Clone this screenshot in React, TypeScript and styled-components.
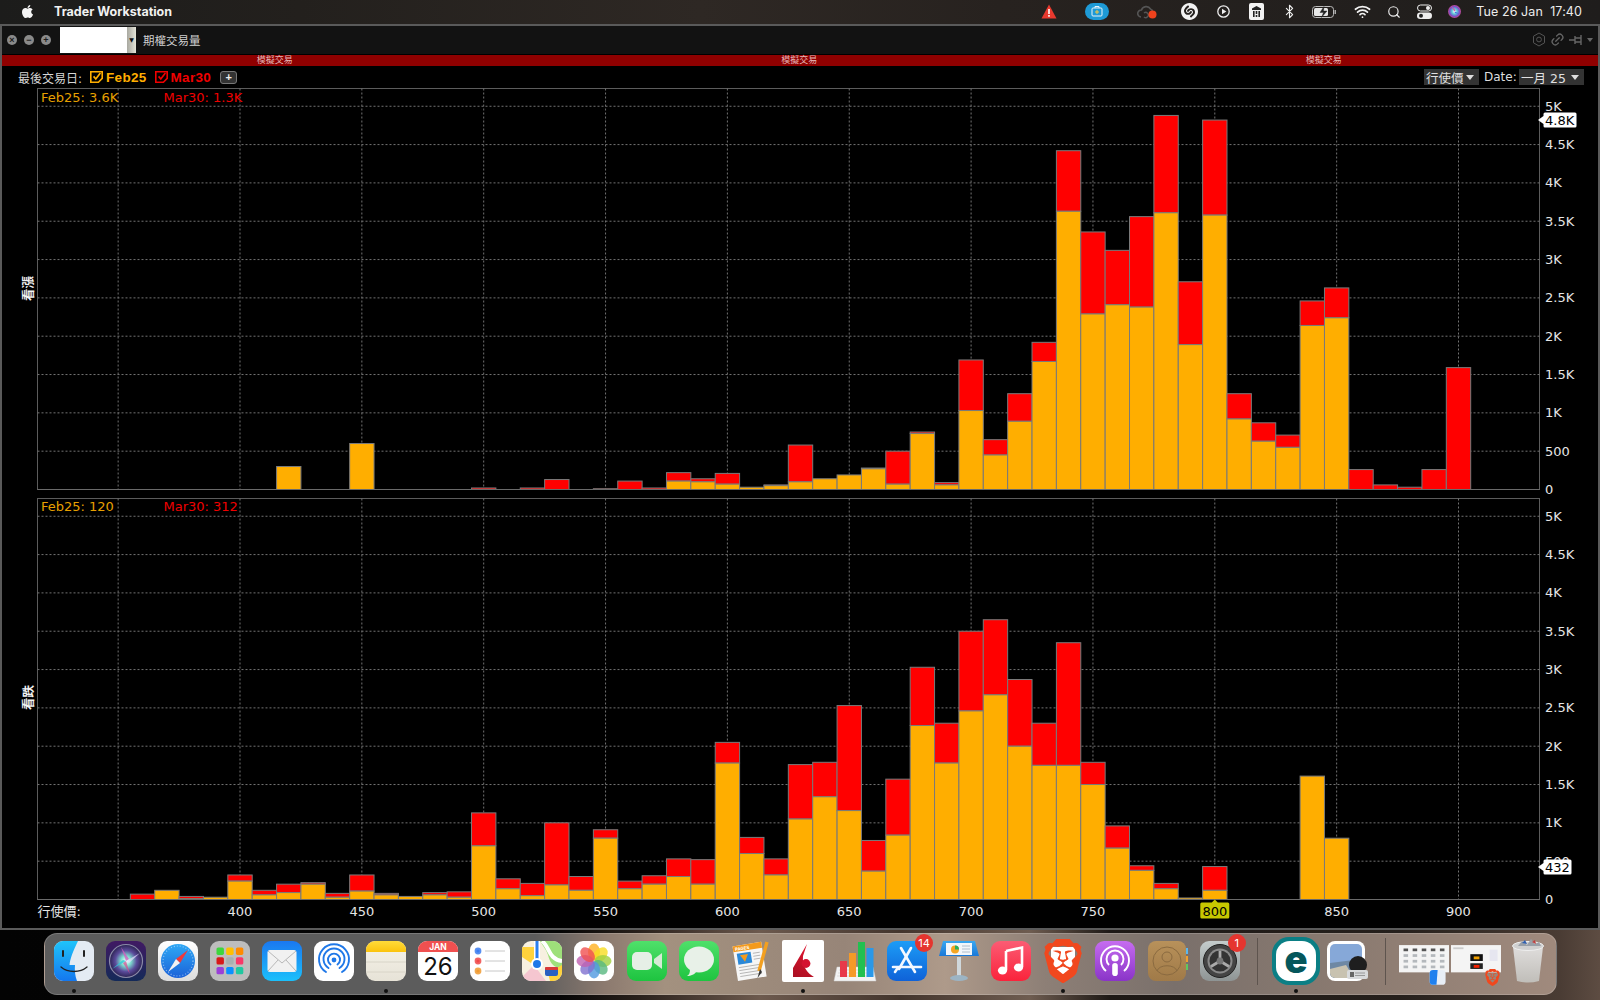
import React from "react";
import styled, { createGlobalStyle } from "styled-components";
import { FaApple } from "react-icons/fa";
import { SiShazam, SiBrave } from "react-icons/si";
import { Bluetooth, Search, Wifi, Link2 } from "lucide-react";

const UI = `"DejaVu Sans", "Noto Sans CJK TC", sans-serif`;

const Global = createGlobalStyle`
  html, body { margin: 0; padding: 0; background: #000; width: 1600px; height: 1000px; overflow: hidden; }
  #root { width: 1600px; height: 1000px; }
`;

const Page = styled.div`
  width: 1600px; height: 1000px; display: flex; flex-direction: column; overflow: hidden;
  font-family: ${UI};
  background:
    linear-gradient(90deg, #030303 0, #050505 560px, #2a211c 640px, #6d5a4e 760px, #43352d 900px, #6e5c50 1030px, #1e1916 1110px, #26201c 1400px, #4a3c34 1560px, #5d4c42 1600px);
`;

/* ---------- menu bar ---------- */
const MenuBar = styled.div`
  height: 24px; flex: none; box-sizing: border-box; display: flex; align-items: center; color: #f0f0f0;
  background: linear-gradient(90deg, #1c1c1b 0, #23201d 300px, #2e2824 700px, #27221f 1000px, #1f1d1c 1600px);
  padding: 0 18px 1px 20px;
`;
const AppleSlot = styled.div` width: 34px; display: flex; align-items: center; `;
const AppName = styled.div`
  font: 700 12.5px "Inter", sans-serif; color: #f2f2f2;
`;
const MenuRight = styled.div` margin-left: auto; display: flex; align-items: center; `;
const MenuSlot = styled.div<{ $w: number }>`
  width: ${(p) => p.$w}px; height: 23px; display: flex; align-items: center; justify-content: center;
`;
const Clock = styled.div`
  margin-left: 10px; font: 400 12.5px "Inter", sans-serif; color: #ececec; white-space: pre; letter-spacing: .1px;
`;

/* ---------- window ---------- */
const Win = styled.div`
  flex: none; height: 906px; box-sizing: border-box; display: flex; flex-direction: column;
  border: 2px solid #5a5a5a; background: #000;
`;
const TitleRow = styled.div`
  height: 28px; flex: none; box-sizing: border-box; display: flex; align-items: center; background: #121212; padding: 0 0 1px 5px;
`;
const Light = styled.div`
  width: 10px; height: 10px; border-radius: 50%; background: #8a8a8a; margin-right: 7px;
  display: flex; align-items: center; justify-content: center;
  font: 700 9px "Liberation Sans", sans-serif; color: #1c1c1c; line-height: 10px;
`;
const SymbolBox = styled.div`
  margin-left: 2px; width: 76px; height: 26px; display: flex; background: #fff;
`;
const SymbolArrow = styled.div`
  margin-left: auto; width: 9px; background: linear-gradient(90deg, #a8a8a0, #e4e4d8);
  display: flex; align-items: center; justify-content: center; font-size: 6px; color: #111;
`;
const WinTitle = styled.div` margin-left: 7px; font-size: 11.5px; color: #d0d0d0; `;
const TitleTools = styled.div`
  margin-left: auto; display: flex; align-items: center; gap: 4px; padding-right: 3px; color: #555;
`;
const DemoBar = styled.div`
  height: 12px; flex: none; box-sizing: border-box; background: #8f0000; border-top: 1px solid #000;
  display: grid; grid-template-columns: repeat(3, 524.5px); padding-left: 10.5px;
  font-size: 9px; line-height: 11px; color: #e6b6b6; text-align: center;
`;
const OptionRow = styled.div`
  height: 21px; flex: none; box-sizing: border-box; display: flex; align-items: center; padding: 1px 14px 0 16px;
  font-size: 12px; color: #d6d6d6;
`;
const CheckLabel = styled.div<{ $c: string; $m: number }>`
  display: flex; align-items: center; gap: 3px; margin-left: ${(p) => p.$m}px;
  color: ${(p) => p.$c}; font: 700 13.5px "Liberation Sans", sans-serif; letter-spacing: .3px;
`;
const AddBtn = styled.div`
  margin-left: 9px; width: 15px; height: 11px; border: 1px solid #777; border-radius: 3px; background: #333;
  color: #eee; font: 700 11px/11px "Liberation Sans", sans-serif; text-align: center;
`;
const Combo = styled.div<{ $w: number }>`
  width: ${(p) => p.$w}px; height: 16px; box-sizing: border-box; background: #333; color: #e0e0e0; display: flex; align-items: center; justify-content: space-between;
  padding: 0 5px 0 2px; font-size: 12.5px; white-space: pre;
`;
const DateLabel = styled.div` margin: 0 4px 0 5px; width: 31px; font-size: 12px; color: #ddd; `;
const Spring = styled.div` flex: 1; `;
const Caret = styled.span`
  width: 0; height: 0; border-left: 4px solid transparent; border-right: 4px solid transparent; border-top: 5px solid #ddd;
`;

const Panel = styled.div<{ $h: number }>`
  height: ${(p) => p.$h}px; flex: none; display: flex;
`;
const SideLabel = styled.div`
  width: 34px; flex: none; display: flex; align-items: center; justify-content: center; padding: 0 0 4px 16px; box-sizing: border-box;
  color: #f2f2f2; font: 700 12.5px "Noto Sans CJK TC", sans-serif;
  & > span { display: block; transform: rotate(-90deg); white-space: nowrap; }
`;
const PlotSvg = styled.svg` display: block; flex: none; overflow: visible; `;
const AxisText = styled.text`
  font: 400 13px ${UI}; fill: #e6e6e6;
`;
const LegendText = styled.text<{ $c: string }>`
  font: 400 13px ${UI}; fill: ${(p) => p.$c};
`;
const TagText = styled.text` font: 400 13px ${UI}; fill: #000; `;

const AxisRow = styled.div` height: 24px; flex: none; `;

/* ---------- dock ---------- */
const DockArea = styled.div`
  flex: 1; display: flex; justify-content: center; padding-top: 3px; box-sizing: border-box;
`;
const Dock = styled.div`
  width: 1513px; height: 62px; box-sizing: border-box; display: flex; align-items: center; padding-left: 3px;
  border: 1px solid rgba(255,255,255,.18); border-radius: 13px; 
  background: linear-gradient(90deg, #5c5c5c 0, #5c5c5c 490px, #8c7a6f 560px, #a3917f 620px, #978578 800px, #ae9a8a 900px, #8d7f76 1000px, #7a706b 1130px, #8a7a70 1300px, #a08a7d 1513px);
`;
const Slot = styled.div`
  width: 52.1px; height: 60px; flex: none; position: relative; display: flex; align-items: center; justify-content: center;
  box-sizing: border-box; padding-bottom: 6px;
`;
const DockSep = styled.div`
  width: 24px; height: 47px; flex: none; display: flex; justify-content: center; margin-bottom: 6px;
  &::before { content: ""; width: 1px; background: #5e544e; }
`;
const RunDot = styled.div`
  position: absolute; bottom: 1px; left: 50%; margin-left: -2px; width: 4px; height: 4px; border-radius: 50%; background: #111;
`;
const Badge = styled.div`
  position: absolute; top: 0; right: 0; width: 18px; height: 18px; border-radius: 50%; background: #e5352f;
  color: #fff; text-align: center; font: 400 11px/18px "Inter", sans-serif;
`;
const IconText = styled.text<{ $s: number; $w?: number; $c: string }>`
  font: ${(p) => p.$w || 400} ${(p) => p.$s}px "Inter", sans-serif; fill: ${(p) => p.$c};
`;

type Bar = [number, number, number];
const topBars: Bar[] = [
  [420,.30,.30],[450,.6,.6],[500,0,.02],[520,0,.02],[530,0,.13],[550,0,.01],[560,0,.11],[570,0,.02],[580,.11,.22],[590,.1,.14],
  [600,.07,.21],[610,.03,.03],[620,.05,.06],[630,.1,.58],[640,.14,.14],[650,.19,.19],[660,.27,.28],[670,.07,.5],[680,.73,.75],[690,.06,.09],
  [700,1.03,1.69],[710,.45,.65],[720,.89,1.25],[730,1.67,1.92],[740,3.63,4.42],[750,2.29,3.36],[760,2.41,3.12],[770,2.38,3.56],[780,3.61,4.88],[790,1.89,2.71],
  [800,3.58,4.82],[810,.92,1.25],[820,.63,.87],[830,.55,.71],[840,2.14,2.46],[850,2.24,2.63],[860,0,.26],[870,0,.06],[880,0,.03],[890,0,.26],[900,0,1.59],
];
const botBars: Bar[] = [
  [360,0,.07],[370,.12,.12],[380,.01,.04],[390,.03,.03],[400,.24,.32],[410,.06,.12],[420,.09,.2],[430,.2,.22],[440,.03,.08],[450,.11,.32],
  [460,.06,.08],[470,.04,.04],[480,.06,.09],[490,.03,.1],[500,.7,1.13],[510,.14,.27],[520,.05,.21],[530,.19,1.0],[540,.12,.3],[550,.8,.91],
  [560,.14,.24],[570,.2,.31],[580,.3,.53],[590,.2,.52],[600,1.78,2.05],[610,.6,.81],[620,.32,.53],[630,1.05,1.76],[640,1.34,1.79],[650,1.16,2.53],
  [660,.37,.77],[670,.84,1.57],[680,2.27,3.03],[690,1.78,2.3],[700,2.46,3.5],[710,2.67,3.65],[720,2.0,2.87],[730,1.75,2.3],[740,1.75,3.35],[750,1.5,1.79],
  [760,.67,.96],[770,.38,.44],[780,.14,.21],[790,.02,.02],[800,.12,.43],[840,1.61,1.61],[850,.8,.8],
];

const SVG_X0 = 36;
const sx = (s: number) => 240 + (s - 400) * 2.437 - SVG_X0;
const PLOT_L = 37.5 - SVG_X0;
const PLOT_R = 1539.5 - SVG_X0;
const KPX = 76.65;
const yTicks = [.5,1,1.5,2,2.5,3,3.5,4,4.5,5];
const yLabel = (v: number) => (v === .5 ? "500" : `${v}K`);
const strikes = [350,400,450,500,550,600,650,700,750,800,850,900];

function Chart({ height, top, base, bars, feb, mar, legendY, tag }: {
  height: number; top: number; base: number; bars: Bar[]; feb: string; mar: string; legendY: number; tag: { y: number; t: string; w: number };
}) {
  const y = (v: number) => base - v * KPX;
  return (
    <PlotSvg width={1562} height={height} viewBox={`0 0 1562 ${height}`}>
      <rect x={PLOT_L} y={top} width={PLOT_R - PLOT_L} height={base - top} fill="#000" stroke="#5c5c5c" />
      {yTicks.map((v) => (
        <line key={v} x1={PLOT_L} x2={PLOT_R} y1={y(v)} y2={y(v)} stroke="#727272" strokeDasharray="2 2" />
      ))}
      {strikes.map((s) => (
        <line key={s} x1={sx(s)} x2={sx(s)} y1={top} y2={base} stroke="#727272" strokeDasharray="2 2" />
      ))}
      {bars.map(([s, a, b]) => {
        const l = sx(s) - 12.18, w = 24.37;
        return (
          <g key={s} stroke="#7a7a7a" strokeWidth={1}>
            {b > a && <rect x={l} y={y(b)} width={w} height={(b - a) * KPX} fill="#ff0000" />}
            {a > 0 && <rect x={l} y={y(a)} width={w} height={a * KPX} fill="#ffae00" />}
          </g>
        );
      })}
      <line x1={PLOT_L} x2={PLOT_R} y1={base} y2={base} stroke="#6a6a6a" />
      <LegendText $c="#e8a000" x={5} y={legendY}>{feb}</LegendText>
      <LegendText $c="#f00000" x={127.5} y={legendY}>{mar}</LegendText>
      {yTicks.map((v) => (
        <AxisText key={v} x={1509} y={y(v) + 4.5}>{yLabel(v)}</AxisText>
      ))}
      <AxisText x={1509} y={base + 4.5}>0</AxisText>
      <g>
        <path d={`M1502 ${tag.y} l5.5 -4 v-2 a1.5 1.5 0 0 1 1.5 -1.5 h${tag.w} a1.5 1.5 0 0 1 1.5 1.5 v12 a1.5 1.5 0 0 1 -1.5 1.5 h-${tag.w} a1.5 1.5 0 0 1 -1.5 -1.5 v-2 z`} fill="#fff" />
        <TagText x={1509} y={tag.y + 5}>{tag.t}</TagText>
      </g>
    </PlotSvg>
  );
}

const AxisSvg = styled.svg` display: block; overflow: visible; `;

function Axis() {
  const labels = [400,450,500,550,600,650,700,750,800,850,900];
  return (
    <AxisSvg width={1596} height={24} viewBox="0 0 1596 24">
      <AxisText x={35.5} y={11}>行使價:</AxisText>
      {labels.map((s) => {
        const cx = 240 + (s - 400) * 2.437 - 2;
        return s === 800 ? (
          <g key={s}>
            <path d={`M${cx - 14.5} -1 a1.5 1.5 0 0 1 1.5 -1.5 h10 l3 -3 l3 3 h10 a1.5 1.5 0 0 1 1.5 1.5 v13 a1.5 1.5 0 0 1 -1.5 1.5 h-26 a1.5 1.5 0 0 1 -1.5 -1.5 z`} fill="#c8c800" />
            <TagText x={cx} y={10.5} textAnchor="middle">800</TagText>
          </g>
        ) : (
          <AxisText key={s} x={cx} y={11} textAnchor="middle">{s}</AxisText>
        );
      })}
    </AxisSvg>
  );
}

/* ---------- icons ---------- */
const Rr = ({ fill, s = 40 }: { fill: string; s?: number }) => <rect x={(44 - s) / 2} y={(44 - s) / 2} width={s} height={s} rx={9} fill={fill} />;
const Ico = ({ children, size = 44 }: { children: React.ReactNode; size?: number }) => (
  <svg width={size} height={size} viewBox="0 0 44 44">{children}</svg>
);

const Grad = ({ id, a, b, x2 = 0, y2 = 1 }: { id: string; a: string; b: string; x2?: number; y2?: number }) => (
  <linearGradient id={id} x1="0" y1="0" x2={x2} y2={y2}><stop offset="0" stopColor={a} /><stop offset="1" stopColor={b} /></linearGradient>
);

const Finder = () => (
  <Ico><defs><Grad id="f1" a="#1fc4fb" b="#1477ee" /></defs>
    <rect x="2" y="2" width="40" height="40" rx="9" fill="#e4ebf3" />
    <path d="M11 2 H26 C21 12 18 20 17.5 26 H23 C22.5 31 23 37 25 42 H11 A9 9 0 0 1 2 33 V11 A9 9 0 0 1 11 2z" fill="url(#f1)" />
    <path d="M11 12v5M32 12v5" stroke="#222" strokeWidth="2" strokeLinecap="round" />
    <path d="M9 28 C16 34 28 34 35 28" stroke="#222" strokeWidth="1.3" fill="none" strokeLinecap="round" />
  </Ico>
);
const Siri = () => (
  <Ico><defs><radialGradient id="s1"><stop offset="0" stopColor="#fff" /><stop offset=".3" stopColor="#7fe0d0" /><stop offset=".65" stopColor="#5a4a9a" /><stop offset="1" stopColor="#2b2352" /></radialGradient><Grad id="s0" a="#401a63" b="#142a58" /></defs>
    <Rr fill="url(#s0)" />
    <circle cx="22" cy="22" r="16.5" fill="url(#s1)" stroke="#8a8aa8" strokeWidth="1.2" />
    <path d="M22 22 L17 8 L25 20z" fill="#d060c0" opacity=".8" /><path d="M22 22 L36 14 L25 24z" fill="#e6e0ff" opacity=".7" /><path d="M22 22 L26 35 L19 24z" fill="#d84a90" opacity=".7" /><path d="M22 22 L8 30 L19 21z" fill="#30c8d8" opacity=".8" />
  </Ico>
);
const Safari = () => (
  <Ico><defs><Grad id="sa" a="#fff" b="#dcdcdc" /><Grad id="sb" a="#2ea8f5" b="#1b62d8" /></defs>
    <Rr fill="url(#sa)" />
    <circle cx="22" cy="22" r="17" fill="url(#sb)" />
    <circle cx="22" cy="22" r="15" fill="none" stroke="#cfe6ff" strokeWidth="1.2" strokeDasharray="1 2" opacity=".6" />
    <path d="M32 11 L20 20 L24 24z" fill="#f0383a" /><path d="M12 33 L20 20 L24 24z" fill="#f2f2f2" />
  </Ico>
);
const Launchpad = () => (
  <Ico><Rr fill="#bdbdbd" />
    {["#3dd63d","#ffbf00","#ff8a00","#d81818","#a8b0b0","#f83868","#9a3fd8","#0a90ff","#20c8a0"].map((c, i) => (
      <rect key={c} x={8.5 + (i % 3) * 9.7} y={8.5 + Math.floor(i / 3) * 9.7} width="7.4" height="7.4" rx="1.6" fill={c} />
    ))}
  </Ico>
);
const Mail = () => (
  <Ico><defs><Grad id="m1" a="#1a78f0" b="#1cc0fb" /></defs><Rr fill="url(#m1)" />
    <rect x="7.5" y="11" width="29" height="22" rx="2.5" fill="#f1f1f1" />
    <path d="M8 12 L22 24 L36 12 M8 32 L18 21 M36 32 L26 21" stroke="#b8b8b8" strokeWidth="1" fill="none" />
  </Ico>
);
const Airdrop = () => (
  <Ico><Rr fill="#fff" />
    <g fill="none" stroke="#1f78e8" strokeWidth="1.9" strokeLinecap="round">
      <path d="M14 33 A15 15 0 1 1 30 33" /><path d="M16.5 29 A10.5 10.5 0 1 1 27.5 29" /><path d="M18.5 25.5 A6 6 0 1 1 25.5 25.5" />
    </g><circle cx="22" cy="21" r="2.4" fill="#1f78e8" />
  </Ico>
);
const Notes = () => (
  <Ico><defs><Grad id="n1" a="#ffdb3a" b="#fbc30e" /><Grad id="n2" a="#f6f3ea" b="#e7e3d7" /></defs>
    <Rr fill="url(#n2)" />
    <path d="M2 13 V11 A9 9 0 0 1 11 2 H33 A9 9 0 0 1 42 11 V13z" fill="url(#n1)" />
    <path d="M2 23h40M2 33h40" stroke="#d8d4c8" />
  </Ico>
);
const Calendar = () => (
  <Ico><Rr fill="#fff" />
    <path d="M2 13 V11 A9 9 0 0 1 11 2 H33 A9 9 0 0 1 42 11 V13z" fill="#f05050" />
    <IconText $s={8.5} $w={700} $c="#fff" x="22" y="11" textAnchor="middle">JAN</IconText>
    <IconText $s={24} $c="#111" x="22" y="36" textAnchor="middle">26</IconText>
  </Ico>
);
const Reminders = () => (
  <Ico><Rr fill="#fff" />
    {[["#3b7df0",12],["#f04848",22],["#f09a30",32]].map(([c, y]) => (
      <g key={String(y)}><circle cx="10" cy={Number(y)} r="3.4" fill={String(c)} opacity=".85" /><circle cx="10" cy={Number(y)} r="1.6" fill={String(c)} /><line x1="17" x2="37" y1={Number(y)} y2={Number(y)} stroke="#c8c8c8" strokeWidth="1" /></g>
    ))}
  </Ico>
);
const Maps = () => (
  <Ico><defs><clipPath id="mp"><rect x="2" y="2" width="40" height="40" rx="9" /></clipPath></defs>
    <g clipPath="url(#mp)">
      <rect x="2" y="2" width="40" height="40" fill="#f7f0e0" />
      <path d="M20 2 H42 V28 C34 30 30 24 28 16 C26 10 22 6 20 2z" fill="#9ee07a" />
      <path d="M22 2 C30 8 28 20 42 22" stroke="#fff" strokeWidth="4" fill="none" />
      <path d="M2 8 L14 8 L14 26 L2 18z" fill="#ffd23c" />
      <path d="M2 38 L14 26 L26 42 H2z" fill="#f5c6d0" />
      <rect x="14" y="2" width="6" height="24" fill="#fff" /><rect x="15.5" y="2" width="3" height="24" fill="#2a7ff0" />
      <path d="M28 34 L42 26 V42 H30z" fill="#ffd23c" />
    </g>
    <circle cx="17" cy="25" r="6" fill="#fff" /><circle cx="17" cy="25" r="4" fill="#1f78e8" />
    <rect x="25" y="28" width="13" height="9" rx="2" fill="#2a60c0" /><rect x="25" y="28" width="13" height="3" rx="1" fill="#d83838" />
  </Ico>
);
const Photos = () => {
  const cs = ["#ffb020","#f8dc20","#a0d040","#58b880","#5098e0","#8070d0","#c060b0","#f05050"];
  return (
    <Ico><Rr fill="#fff" />
      {cs.map((c, i) => (
        <ellipse key={c} cx="22" cy="13" rx="6" ry="8.5" fill={c} opacity=".8" transform={`rotate(${i * 45} 22 22)`} />
      ))}
    </Ico>
  );
};
const FaceTime = () => (
  <Ico><defs><Grad id="ft" a="#4fe06a" b="#1ec440" /></defs><Rr fill="url(#ft)" />
    <rect x="7" y="13" width="20" height="18" rx="5" fill="#e6efe6" />
    <path d="M29 20 L37 14 V30 L29 24z" fill="#d6ead6" />
  </Ico>
);
const Messages = () => (
  <Ico><defs><Grad id="ms" a="#4fe06a" b="#1ec440" /></defs><Rr fill="url(#ms)" />
    <ellipse cx="22" cy="20.5" rx="15" ry="13" fill="#e8f1e8" />
    <path d="M13 30 C13 34 12 36 10 37 C14 37 18 35 19 33z" fill="#e8f1e8" />
  </Ico>
);
const Pages = () => (
  <Ico>
    <g transform="rotate(-9 20 22)">
      <rect x="6" y="5" width="29" height="35" fill="#f6f6f6" />
      <rect x="6" y="5" width="29" height="6" fill="#f39a1c" />
      <IconText $s={4.4} $w={700} $c="#fff" x="8" y="10">PAGES</IconText>
      <rect x="9" y="13" width="14" height="11" fill="#2a88d8" />
      <path d="M12 15 h8 l-4 7z" fill="#f59a1c" />
      <path d="M9 27h22M9 30h22M9 33h22M9 36h22M25 15h7M25 18h7M25 21h7" stroke="#aaa" strokeWidth=".8" />
    </g>
    <path d="M38 3 L30 32" stroke="#f3a020" strokeWidth="3.4" />
    <path d="M31 30 L28.5 39 L33 33z" fill="#333" />
  </Ico>
);
const IB = () => (
  <Ico>
    <defs><Grad id="ib" a="#d8142e" b="#a00f20" x2={-0.4} y2={1} /></defs>
    <rect x="1" y="1" width="42" height="42" rx="2" fill="#fff" />
    <path d="M26 5 L12 29 V38 H33 C26 34 21 27 22 17 z" fill="url(#ib)" />
    <circle cx="25" cy="24.5" r="4.4" fill="#d41230" />
  </Ico>
);
const Numbers = () => (
  <Ico>
    <path d="M1 42 L4 28 H40 L43 42z" fill="#f3f3f3" stroke="#ccc" strokeWidth=".5" />
    <path d="M6 31h32M5 34h34M4 37h36" stroke="#ccc" strokeWidth=".6" />
    <rect x="7" y="22" width="7" height="16" fill="#e8384a" />
    <rect x="16" y="14" width="7" height="24" fill="#f59a28" />
    <rect x="25" y="3" width="7" height="35" fill="#22c050" />
    <rect x="33.5" y="9" width="7" height="29" fill="#2a98e8" />
  </Ico>
);
const AppStore = () => (
  <Ico><defs><Grad id="as" a="#1c9cf6" b="#0f62d8" /></defs><Rr fill="url(#as)" />
    <g stroke="#f4f8ff" strokeWidth="2.6" strokeLinecap="round">
      <path d="M16 9 L30 33" /><path d="M26 9 L14 30" /><path d="M8 28 H36" /><path d="M10 33 L12 30" />
    </g>
  </Ico>
);
const Keynote = () => (
  <Ico><defs><Grad id="kn" a="#3aa8f0" b="#1a78d8" /></defs>
    <path d="M6 2 H38 L42 17 H2z" fill="url(#kn)" />
    <rect x="9" y="4" width="26" height="12" fill="#f2f6fa" />
    <circle cx="18" cy="10.5" r="4" fill="#f5a623" /><path d="M18 10.5 V6.5 A4 4 0 0 1 22 10.5z" fill="#28b060" />
    <path d="M25 7h8M25 10h8M25 13h8" stroke="#a0b0c0" strokeWidth=".8" />
    <rect x="20" y="18" width="4" height="19" fill="#d0d8dc" />
    <ellipse cx="22" cy="39" rx="9" ry="3" fill="#9cb4c4" />
  </Ico>
);
const Music = () => (
  <Ico><defs><Grad id="mu" a="#fb5c74" b="#fa233b" /></defs><Rr fill="url(#mu)" />
    <path d="M17 12 L33 8.5 V28" stroke="#fff" strokeWidth="2.6" fill="none" />
    <path d="M17 12 V31" stroke="#fff" strokeWidth="2.6" />
    <ellipse cx="13.5" cy="31.5" rx="4.6" ry="4" fill="#fff" /><ellipse cx="29.5" cy="28.5" rx="4.6" ry="4" fill="#fff" />
  </Ico>
);
const Brave = () => (
  <svg width="44" height="48" viewBox="0 0 44 48">
    <path d="M10 10 H34 V36 L22 44 L10 36z" fill="#fff" />
    <foreignObject x="0" y="0" width="44" height="48"><SiBrave size={44} color="#f1481e" style={{ height: 48 }} /></foreignObject>
  </svg>
);
const Podcasts = () => (
  <Ico><defs><Grad id="pc" a="#c66cf0" b="#8a34c8" /></defs><Rr fill="url(#pc)" />
    <g fill="none" stroke="#fff" strokeWidth="1.9"><path d="M13 32 A14 14 0 1 1 31 32" /><path d="M16 26 A8.5 8.5 0 1 1 28 26" /></g>
    <circle cx="22" cy="19" r="3.6" fill="#fff" /><rect x="19.2" y="24" width="5.6" height="13" rx="2.8" fill="#fff" />
  </Ico>
);
const Contacts = () => (
  <Ico><defs><Grad id="ct" a="#b8915a" b="#a07a48" /></defs>
    <rect x="2" y="2" width="38" height="40" rx="8" fill="url(#ct)" />
    <rect x="40" y="9" width="2" height="6" fill="#5ab8f0" /><rect x="40" y="17" width="2" height="6" fill="#f0a030" /><rect x="40" y="25" width="2" height="6" fill="#60c860" />
    <circle cx="21" cy="22" r="14" fill="none" stroke="#8a6a40" strokeWidth="1" />
    <circle cx="21" cy="18" r="5" fill="none" stroke="#8a6a40" strokeWidth="1" />
    <path d="M11 32 C13 25 29 25 31 32" fill="none" stroke="#8a6a40" strokeWidth="1" />
  </Ico>
);
const SysPrefs = () => (
  <Ico><defs><Grad id="sy" a="#c4cccc" b="#8e9494" /></defs><Rr fill="url(#sy)" />
    <circle cx="22" cy="22" r="16.5" fill="#444" stroke="#222" />
    <circle cx="22" cy="22" r="12.5" fill="#8a8a8a" />
    <circle cx="22" cy="22" r="10.5" fill="#333" />
    <g stroke="#aaa" strokeWidth="2.8"><path d="M22 22 V11.5" /><path d="M22 22 L31 27.5" /><path d="M22 22 L13 27.5" /></g>
    <circle cx="22" cy="22" r="3.4" fill="#777" />
  </Ico>
);
const Eset = () => (
  <svg width="50" height="50" viewBox="0 0 50 50">
    <rect x="1" y="1" width="48" height="48" rx="17" fill="#0b7f85" />
    <rect x="5" y="5" width="40" height="40" rx="14" fill="#fff" />
    <IconText $s={38} $w={900} $c="#05575c" x="25" y="37" textAnchor="middle">e</IconText>
  </svg>
);
const Preview = () => (
  <Ico>
    <rect x="1" y="2" width="38" height="40" rx="8" fill="#fff" />
    <rect x="4" y="5" width="32" height="34" rx="5" fill="#86a8d8" />
    <path d="M4 24 L36 20 V39 H9 A5 5 0 0 1 4 34z" fill="#6e88a4" />
    <path d="M4 30 L20 26 L28 39 H9 A5 5 0 0 1 4 34z" fill="#c8c2b0" />
    <circle cx="32" cy="26" r="9" fill="#1e1e1e" /><rect x="21" y="31" width="21" height="9" rx="2" fill="#d8dadc" />
    <rect x="24" y="33" width="4" height="5" fill="#666" />
    <path d="M29 34h10M29 36.5h10" stroke="#888" strokeWidth=".8" />
  </Ico>
);
const Stack1 = () => (
  <Ico size={50}>
    <rect x="0" y="8" width="44" height="24" fill="#f4f4f4" />
    {Array.from({ length: 20 }, (_, i) => (
      <rect key={i} x={4 + (i % 5) * 8} y={11 + Math.floor(i / 5) * 5} width="4" height="2.4" fill={i < 5 ? "#555" : "#b4b8bc"} />
    ))}
    <rect x="27" y="30" width="14" height="13" rx="3" fill="#e8eef6" />
    <path d="M27 33 a3 3 0 0 1 3 -3 h4 l-1 13 h-3 a3 3 0 0 1 -3 -3z" fill="#2080ee" />
  </Ico>
);
const Stack2 = () => (
  <Ico size={50}>
    <rect x="0" y="8" width="44" height="24" fill="#f4f4f4" />
    <rect x="17" y="16" width="11" height="6" fill="#111" /><rect x="17" y="24" width="11" height="5" fill="#222" />
    <rect x="20" y="18" width="5" height="2.5" fill="#f0a000" /><rect x="20" y="25.5" width="5" height="2.5" fill="#f02000" />
    <rect x="2" y="10" width="9" height="1.6" fill="#ccc" /><rect x="34" y="12" width="7" height="10" fill="#e6e6f0" />
    <g transform="translate(29 29)"><SiBrave size={15} color="#f1481e" /></g>
  </Ico>
);
const Trash = () => (
  <svg width="36" height="48" viewBox="0 0 36 48">
    <defs><Grad id="tr" a="#e6e6e6" b="#c4c4c0" /></defs>
    <path d="M3 10 L7 44 Q18 47 29 44 L33 10z" fill="url(#tr)" opacity=".9" />
    <ellipse cx="18" cy="9" rx="15.5" ry="4.5" fill="#d0d0d0" stroke="#eee" />
    <path d="M8 9 l4 -5 l5 4 l4 -6 l4 5 l4 -2 l2 4z" fill="#9aa0a8" />
    <path d="M12 6 l3 -3 l2 4z" fill="#3060b0" /><path d="M22 5 l3 -2 l1 4z" fill="#c04040" />
  </svg>
);

const dockA: { el: React.ReactNode; dot?: boolean; badge?: string }[] = [
  { el: <Finder />, dot: true }, { el: <Siri /> }, { el: <Safari /> }, { el: <Launchpad /> }, { el: <Mail /> }, { el: <Airdrop /> },
  { el: <Notes />, dot: true }, { el: <Calendar /> }, { el: <Reminders /> }, { el: <Maps /> }, { el: <Photos /> }, { el: <FaceTime /> },
  { el: <Messages /> }, { el: <Pages /> }, { el: <IB />, dot: true }, { el: <Numbers /> }, { el: <AppStore />, badge: "14" }, { el: <Keynote /> },
  { el: <Music /> }, { el: <Brave />, dot: true }, { el: <Podcasts /> }, { el: <Contacts /> }, { el: <SysPrefs />, badge: "1" },
];

const DockItem = ({ el, dot, badge }: { el: React.ReactNode; dot?: boolean; badge?: string }) => (
  <Slot>{el}{dot && <RunDot />}{badge && <Badge>{badge}</Badge>}</Slot>
);

const Check = ({ c }: { c: string }) => (
  <svg width="13" height="12" viewBox="0 0 13 12"><path d="M.8.8h11.4v6.6l-3.8 3.8H.8z" fill="none" stroke={c} strokeWidth="1.6" /><path d="M3.6 5.4l2.2 2.6 4.6-6" fill="none" stroke={c} strokeWidth="1.7" /></svg>
);

export default function App() {
  return (
    <Page>
      <Global />
      <MenuBar>
        <AppleSlot><FaApple size={15} color="#f4f4f4" /></AppleSlot>
        <AppName>Trader Workstation</AppName>
        <MenuRight>
          <MenuSlot $w={47}><svg width="16" height="15" viewBox="0 0 16 15"><path d="M8 0.5 L15.5 14.5 H.5z" fill="#e8392e" /><path d="M7.2 5h1.6v5H7.2zM7.2 11h1.6v1.8H7.2z" fill="#fff" /></svg></MenuSlot>
          <MenuSlot $w={49}><svg width="24" height="17" viewBox="0 0 24 17"><rect width="24" height="17" rx="8.5" fill="#1e9ad6" /><rect x="7" y="5" width="10" height="8" rx="1" fill="none" stroke="#e8f4fa" strokeWidth="1" /><path d="M10 5V3.5h4V5" stroke="#e8f4fa" fill="none" /><path d="M12 7v4M10 9h4" stroke="#f5c842" /></svg></MenuSlot>
          <MenuSlot $w={52}><svg width="20" height="14" viewBox="0 0 20 14"><path d="M4 12 a3.5 3.5 0 0 1 .5 -7 a5 5 0 0 1 9 -1 a3 3 0 0 1 2 3" fill="none" stroke="#555" strokeWidth="1.6" /><path d="M7 8a2.6 2.6 0 1 1 0 4" fill="none" stroke="#555" strokeWidth="1.4" /><circle cx="15.5" cy="9.5" r="4" fill="#f0421c" /></svg></MenuSlot>
          <MenuSlot $w={32}><SiShazam size={17} color="#f2f2f2" /></MenuSlot>
          <MenuSlot $w={36}><svg width="13" height="13" viewBox="0 0 13 13"><circle cx="6.5" cy="6.5" r="5.7" fill="none" stroke="#eee" strokeWidth="1.3" /><path d="M5 3.8 L9.4 6.5 L5 9.2z" fill="#eee" /></svg></MenuSlot>
          <MenuSlot $w={31}><svg width="15" height="17" viewBox="0 0 15 17"><rect width="15" height="17" rx="2" fill="#f2f2f2" /><path d="M3 5.5 L7.5 3 L12 5.5 V7H3zM4 8h1.6v6H4zM6.7 8h1.6v3H6.7zM9.4 8h1.6v6H9.4zM6.7 12h1.6v2H6.7z" fill="#222" /></svg></MenuSlot>
          <MenuSlot $w={34}><Bluetooth size={15} color="#eee" strokeWidth={1.8} /></MenuSlot>
          <MenuSlot $w={36}><svg width="25" height="12" viewBox="0 0 25 12"><rect x=".5" y=".5" width="21" height="11" rx="3" fill="none" stroke="#bbb" /><rect x="2" y="2" width="14" height="8" rx="1.5" fill="#e8e8e8" /><rect x="22.5" y="4" width="1.5" height="4" fill="#aaa" /><path d="M12 .5 L8 6.5 h3.5 L9.5 11.5 L15 5 h-3.5z" fill="#222" stroke="#222" strokeWidth=".4" /></svg></MenuSlot>
          <MenuSlot $w={40}><Wifi size={17} color="#f2f2f2" strokeWidth={2.4} /></MenuSlot>
          <MenuSlot $w={24}><Search size={14} color="#eee" strokeWidth={2} /></MenuSlot>
          <MenuSlot $w={36}><svg width="15" height="15" viewBox="0 0 15 15"><rect x=".5" y="1" width="14" height="6" rx="3" fill="none" stroke="#eee" /><circle cx="11" cy="4" r="2" fill="#eee" /><rect x="0" y="8.5" width="15" height="6.5" rx="3.2" fill="#eee" /><circle cx="4" cy="11.7" r="2" fill="#222" /></svg></MenuSlot>
          <MenuSlot $w={24}><svg width="13" height="13" viewBox="0 0 13 13"><defs><radialGradient id="si"><stop offset="0" stopColor="#fff" /><stop offset=".4" stopColor="#5ac8d8" /><stop offset=".75" stopColor="#7a50c8" /><stop offset="1" stopColor="#c04a90" /></radialGradient></defs><circle cx="6.5" cy="6.5" r="6.5" fill="url(#si)" /><path d="M6.5 6.5L3 1 7.5 5z" fill="#e050a0" /><path d="M6.5 6.5L12 9 7 8z" fill="#4a60e0" /></svg></MenuSlot>
          <Clock>Tue 26 Jan  17:40</Clock>
        </MenuRight>
      </MenuBar>
      <Win>
        <TitleRow>
          <Light>×</Light><Light>−</Light><Light>+</Light>
          <SymbolBox><SymbolArrow>▼</SymbolArrow></SymbolBox>
          <WinTitle>期權交易量</WinTitle>
          <TitleTools>
            <svg width="14" height="15" viewBox="0 0 14 15"><path d="M7 1l5.5 3.2v6.6L7 14l-5.5-3.2V4.2z" fill="none" stroke="#555" /><circle cx="7" cy="7.5" r="2.4" fill="none" stroke="#555" /></svg>
            <Link2 size={15} color="#666" style={{ transform: "rotate(-45deg)" }} />
            <svg width="26" height="12" viewBox="0 0 26 12"><path d="M0 6h6M6 2v8M6 4h6v4H6M12 1v10" fill="none" stroke="#666" strokeWidth="1.4" /><path d="M18 4h6l-3 4z" fill="#666" /></svg>
          </TitleTools>
        </TitleRow>
        <DemoBar><div>模擬交易</div><div>模擬交易</div><div>模擬交易</div></DemoBar>
        <OptionRow>
          最後交易日:
          <CheckLabel $c="#ffae00" $m={8}><Check c="#ffae00" />Feb25</CheckLabel>
          <CheckLabel $c="#f00000" $m={8}><Check c="#f00000" />Mar30</CheckLabel>
          <AddBtn>+</AddBtn>
          <Spring />
          <Combo $w={55}>行使價<Caret /></Combo>
          <DateLabel>Date:</DateLabel>
          <Combo $w={65}>一月 25<Caret /></Combo>
        </OptionRow>
        <Panel $h={407}>
          <SideLabel><span>看漲</span></SideLabel>
          <Chart height={407} top={1.5} base={402.5} bars={topBars} feb="Feb25: 3.6K" mar="Mar30: 1.3K" legendY={15} tag={{ y: 33, t: "4.8K", w: 30 }} />
        </Panel>
        <Panel $h={411}>
          <SideLabel><span>看跌</span></SideLabel>
          <Chart height={411} top={4.5} base={405.5} bars={botBars} feb="Feb25: 120" mar="Mar30: 312" legendY={17} tag={{ y: 373, t: "432", w: 25 }} />
        </Panel>
        <AxisRow><Axis /></AxisRow>
      </Win>
      <DockArea>
        <Dock>
          {dockA.map((d, i) => <DockItem key={i} {...d} />)}
          <DockSep />
          <DockItem el={<Eset />} dot />
          <DockItem el={<Preview />} />
          <DockSep />
          <DockItem el={<Stack1 />} />
          <DockItem el={<Stack2 />} />
          <DockItem el={<Trash />} />
        </Dock>
      </DockArea>
    </Page>
  );
}
